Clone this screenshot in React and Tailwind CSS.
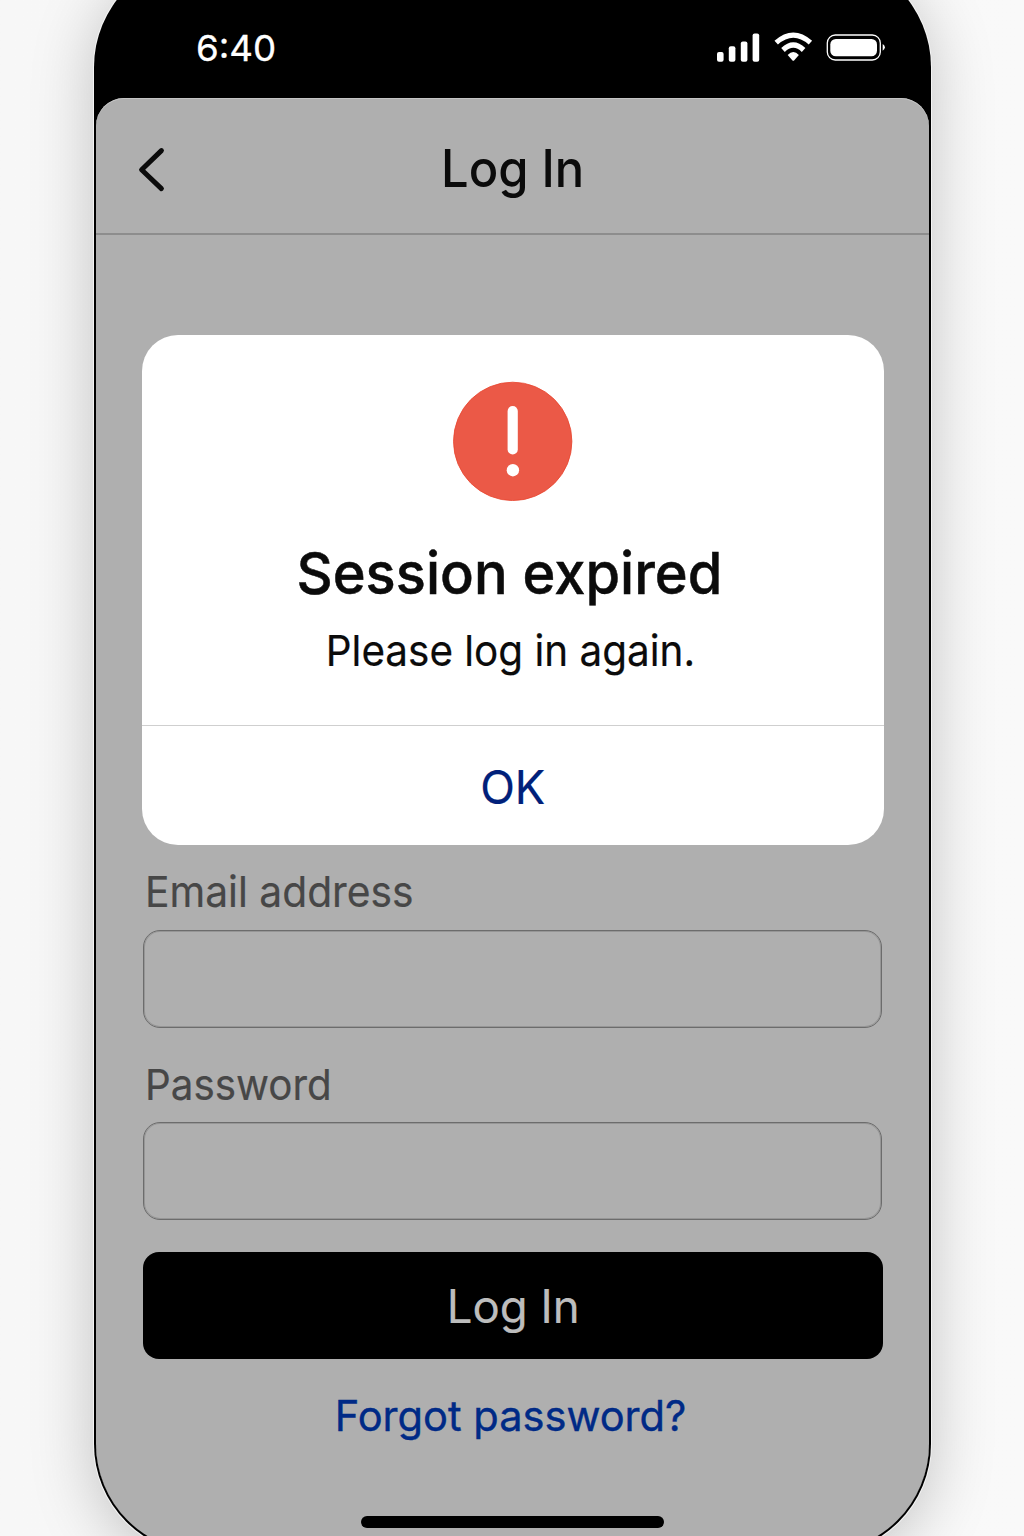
import React from "react";

function StatusIcons() {
  return (
    <svg width="172" height="36" viewBox="714 30 172 36" fill="#fff" aria-hidden="true">
      <rect x="717" y="52" width="6.6" height="9.7" rx="2" />
      <rect x="728.8" y="46.3" width="6.6" height="15.4" rx="2" />
      <rect x="740.8" y="41.6" width="6.6" height="20.1" rx="2" />
      <rect x="752.6" y="33.6" width="6.6" height="28.1" rx="2" />
      <g fill="none" stroke="#fff" strokeWidth="5.2">
        <path d="M776.2 42.6 Q793.3 27.6 810.4 42.6" />
        <path d="M783 50 Q793.3 40.2 803.6 50" />
      </g>
      <path d="M787.7 54.9 Q793.3 49 798.9 54.9 L794.1 60.4 Q793.3 61.2 792.5 60.4 Z" />
      <rect x="827.3" y="35" width="53" height="25" rx="8" fill="none" stroke="#fff" strokeWidth="1.3" />
      <rect x="830.3" y="38.9" width="46.7" height="17.4" rx="5.5" />
      <path d="M882.7 44 Q884.9 45.6 884.9 47.3 Q884.9 49 882.7 50.8 Z" />
    </svg>
  );
}

function Field({ label, leading, scale, className }) {
  return (
    <label className={className}>
      <span className={`block h-[54px] pl-[1.5px] text-[43px] text-[#474747] ${leading}`}>
        <span className={`inline-block origin-left [-webkit-text-stroke:0.2px_#474747] ${scale}`}>{label}</span>
      </span>
      <span className="mt-[11px] block h-[98px] w-[739px] rounded-[17px] border border-[#6c6c6c] shadow-[inset_0_0_0_1px_#969696]" />
    </label>
  );
}

export default function App() {
  return (
    <div className="h-[1536px] w-[1024px] overflow-hidden bg-linear-to-r from-[#f7f7f7] to-[#f9f9f9] font-['Inter',sans-serif]">
      <div className="-mt-[43px] ml-[94px] flex h-[1597px] w-[837px] flex-col rounded-[110px] bg-black px-[2px] pb-[2px] pt-[43px] shadow-[0_0_0_1px_#f4f4f4,0_10px_64px_rgba(0,0,0,0.22)]">
        <header className="flex h-[98px] shrink-0 justify-between pl-[100px] pr-[43px] pt-[30px] text-white">
          <span className="origin-left scale-x-[1.02] text-[36px] leading-[36px] [-webkit-text-stroke:0.3px_#fff]">6:40</span>
          <StatusIcons />
        </header>

        <main className="flex flex-1 flex-col rounded-b-[108px] rounded-t-[28px] bg-[#afafaf] shadow-[inset_0_1px_0_#c4c4c4]">
          <nav className="grid h-[137px] shrink-0 grid-cols-[1fr_auto_1fr] items-center border-b-2 border-[#8d8d8d]">
            <svg className="ml-[42px] mt-[8px]" width="28" height="46" viewBox="138 147 28 46" fill="none" stroke="#0b0b0b" strokeWidth="5" strokeLinecap="round" strokeLinejoin="round" aria-hidden="true">
              <path d="M161.4 150.6 L141.6 169.8 L161.4 188.6" />
            </svg>
            <h1 className="mt-[6px] w-[143px] text-[52px] font-medium leading-[60px] text-[#0b0b0b]">
              <span className="inline-block origin-left scale-x-[0.94] whitespace-nowrap">Log In</span>
            </h1>
          </nav>

          <section className="ml-[46px] mt-[100px] flex h-[510px] w-[742px] shrink-0 flex-col rounded-[36px] bg-white text-[#0b0b0b]">
            <div className="flex flex-1 flex-col items-center pt-[46px]">
              <svg width="120" height="120" viewBox="0 0 120 120" aria-hidden="true">
                <circle cx="59.7" cy="60.4" r="59.2" fill="#eb5947" stroke="#e8452f" strokeWidth="0.8" />
                <rect x="54.6" y="25" width="10.2" height="48.6" rx="5.1" fill="#fff" />
                <circle cx="59.9" cy="89.2" r="6.2" fill="#fff" />
              </svg>
              <h2 className="mt-[37px] text-[58px] font-medium leading-[70px]">
                <span className="-ml-[8px] inline-block scale-x-[0.966] whitespace-nowrap [-webkit-text-stroke:0.5px_#0b0b0b]">Session expired</span>
              </h2>
              <p className="mt-[15px] text-[43px] leading-[54px]">
                <span className="-ml-[5px] inline-block scale-x-[0.94] whitespace-nowrap [-webkit-text-stroke:0.2px_#0b0b0b]">Please log in again.</span>
              </p>
            </div>
            <button className="h-[120px] border-t-[1.5px] border-[#cfcfcf] pt-[2px] text-[47px] leading-[56px] text-[#00207a]">
              <span className="inline-block scale-x-[0.965] [-webkit-text-stroke:0.2px_#00207a]">OK</span>
            </button>
          </section>

          <form className="ml-[47px] mt-[20px] flex w-[740px] flex-col">
            <Field label="Email address" leading="leading-[53px]" scale="scale-x-[0.948]" className="block" />
            <Field label="Password" leading="leading-[55px]" scale="scale-x-[0.938]" className="mt-[29px] block" />
            <button type="button" className="mt-[32px] h-[107px] rounded-[16px] bg-black text-[46px] leading-[56px] text-[#bdbdbd]">
              <span className="inline-block scale-x-[0.99] [-webkit-text-stroke:0.2px_#bdbdbd]">Log In</span>
            </button>
          </form>

          <a className="mt-[30px] self-center whitespace-nowrap text-[42px] leading-[54px] text-[#002a86]">
            <span className="-ml-[4px] inline-block scale-x-[0.99] [-webkit-text-stroke:0.4px_#002a86]">Forgot password?</span>
          </a>
          <div className="ml-[265px] mt-[73px] h-[12px] w-[303px] rounded-full bg-black" />
        </main>
      </div>
    </div>
  );
}
